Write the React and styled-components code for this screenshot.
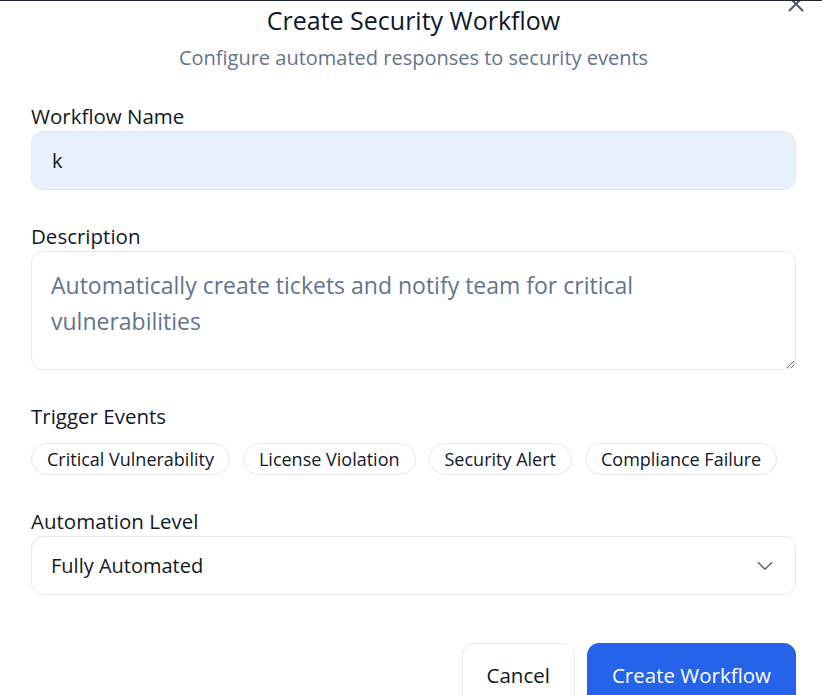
import React from "react";
import styled, { createGlobalStyle } from "styled-components";
import { ChevronDown, X } from "lucide-react";

const Global = createGlobalStyle`
  * { box-sizing: border-box; }
  html, body { margin: 0; padding: 0; background: #ffffff; }
  body {
    font-family: "Open Sans", "Noto Sans", sans-serif;
    color: #111827;
    overflow: hidden;
  }
`

const Page = styled.div`
  border-top: 1px solid #1f2433;
  height: 695px;
  overflow: hidden;
`

const Dialog = styled.div`
  position: relative;
  padding: 0 26px 0 31px;
`

const Close = styled.button`
  position: absolute;
  top: -10px;
  right: 13px;
  width: 26px;
  height: 26px;
  padding: 0;
  border: none;
  background: none;
  color: #4b5563;
  display: flex;
  align-items: center;
  justify-content: center;
`

const Header = styled.div`
  text-align: center;
  margin-bottom: 27px;
`

const Title = styled.h2`
  margin: 0;
  font-size: 25px;
  line-height: 38px;
  font-weight: 500;
  color: #0f172a;
`

const Subtitle = styled.p`
  margin: 0;
  font-size: 20px;
  line-height: 38px;
  color: #64748b;
`

const Form = styled.div`
  display: flex;
  flex-direction: column;
  gap: 34px;
`

const Group = styled.div`
  display: flex;
  flex-direction: column;
  gap: ${({ $gap }) => $gap || 3}px;
`

const Label = styled.label`
  font-size: 20.5px;
  line-height: 24px;
  color: #111827;
`

const Input = styled.input`
  height: 59px;
  width: 100%;
  border: 1px solid #e5e7eb;
  border-radius: 12px;
  background: #e8f0fd;
  padding: 0 20px;
  font: inherit;
  font-size: 20px;
  color: #111827;
  outline: none;
`

const TextArea = styled.textarea`
  height: 119px;
  width: 100%;
  border: 1px solid #e5e7eb;
  border-radius: 12px;
  background: #fff;
  padding: 15px 80px 15px 19px;
  font: inherit;
  font-size: 23px;
  line-height: 36px;
  color: #111827;
  outline: none;
  resize: vertical;
  &::placeholder { color: #64748b; }
`

const Chips = styled.div`
  display: flex;
  gap: 13px;
  flex-wrap: wrap;
`

const Chip = styled.button`
  height: 32px;
  padding: 0 15px;
  border: 1px solid #e5e7eb;
  border-radius: 999px;
  background: #fff;
  font: inherit;
  font-size: 18px;
  color: #111827;
`

const SelectBox = styled.div`
  height: 59px;
  border: 1px solid #e5e7eb;
  border-radius: 12px;
  background: #fff;
  padding: 0 17px 0 19px;
  display: flex;
  align-items: center;
  justify-content: space-between;
  font-size: 20px;
  color: #111827;
  svg { color: #6b7280; }
`

const Footer = styled.div`
  display: flex;
  justify-content: flex-end;
  gap: 12px;
  margin-top: 48px;
`

const Button = styled.button`
  height: 64px;
  padding: 0 24px;
  border-radius: 12px;
  font: inherit;
  font-size: 20.5px;
  border: 1px solid ${({ $primary }) => ($primary ? "#2563eb" : "#e5e7eb")};
  background: ${({ $primary }) => ($primary ? "#2563eb" : "#fff")};
  color: ${({ $primary }) => ($primary ? "#fff" : "#111827")};
`

const triggers = ["Critical Vulnerability", "License Violation", "Security Alert", "Compliance Failure"];

export default function App() {
  return (
    <Page>
      <Global />
      <Dialog>
        <Close aria-label="Close"><X size={26} strokeWidth={1.8} /></Close>
        <Header>
          <Title>Create Security Workflow</Title>
          <Subtitle>Configure automated responses to security events</Subtitle>
        </Header>
        <Form>
          <Group>
            <Label>Workflow Name</Label>
            <Input defaultValue="k" />
          </Group>
          <Group>
            <Label>Description</Label>
            <TextArea placeholder="Automatically create tickets and notify team for critical vulnerabilities" />
          </Group>
          <Group $gap={15}>
            <Label>Trigger Events</Label>
            <Chips>
              {triggers.map((t) => (
                <Chip key={t}>{t}</Chip>
              ))}
            </Chips>
          </Group>
          <Group>
            <Label>Automation Level</Label>
            <SelectBox>
              <span>Fully Automated</span>
              <ChevronDown size={26} strokeWidth={1.6} />
            </SelectBox>
          </Group>
        </Form>
        <Footer>
          <Button>Cancel</Button>
          <Button $primary>Create Workflow</Button>
        </Footer>
      </Dialog>
    </Page>
  );
}
